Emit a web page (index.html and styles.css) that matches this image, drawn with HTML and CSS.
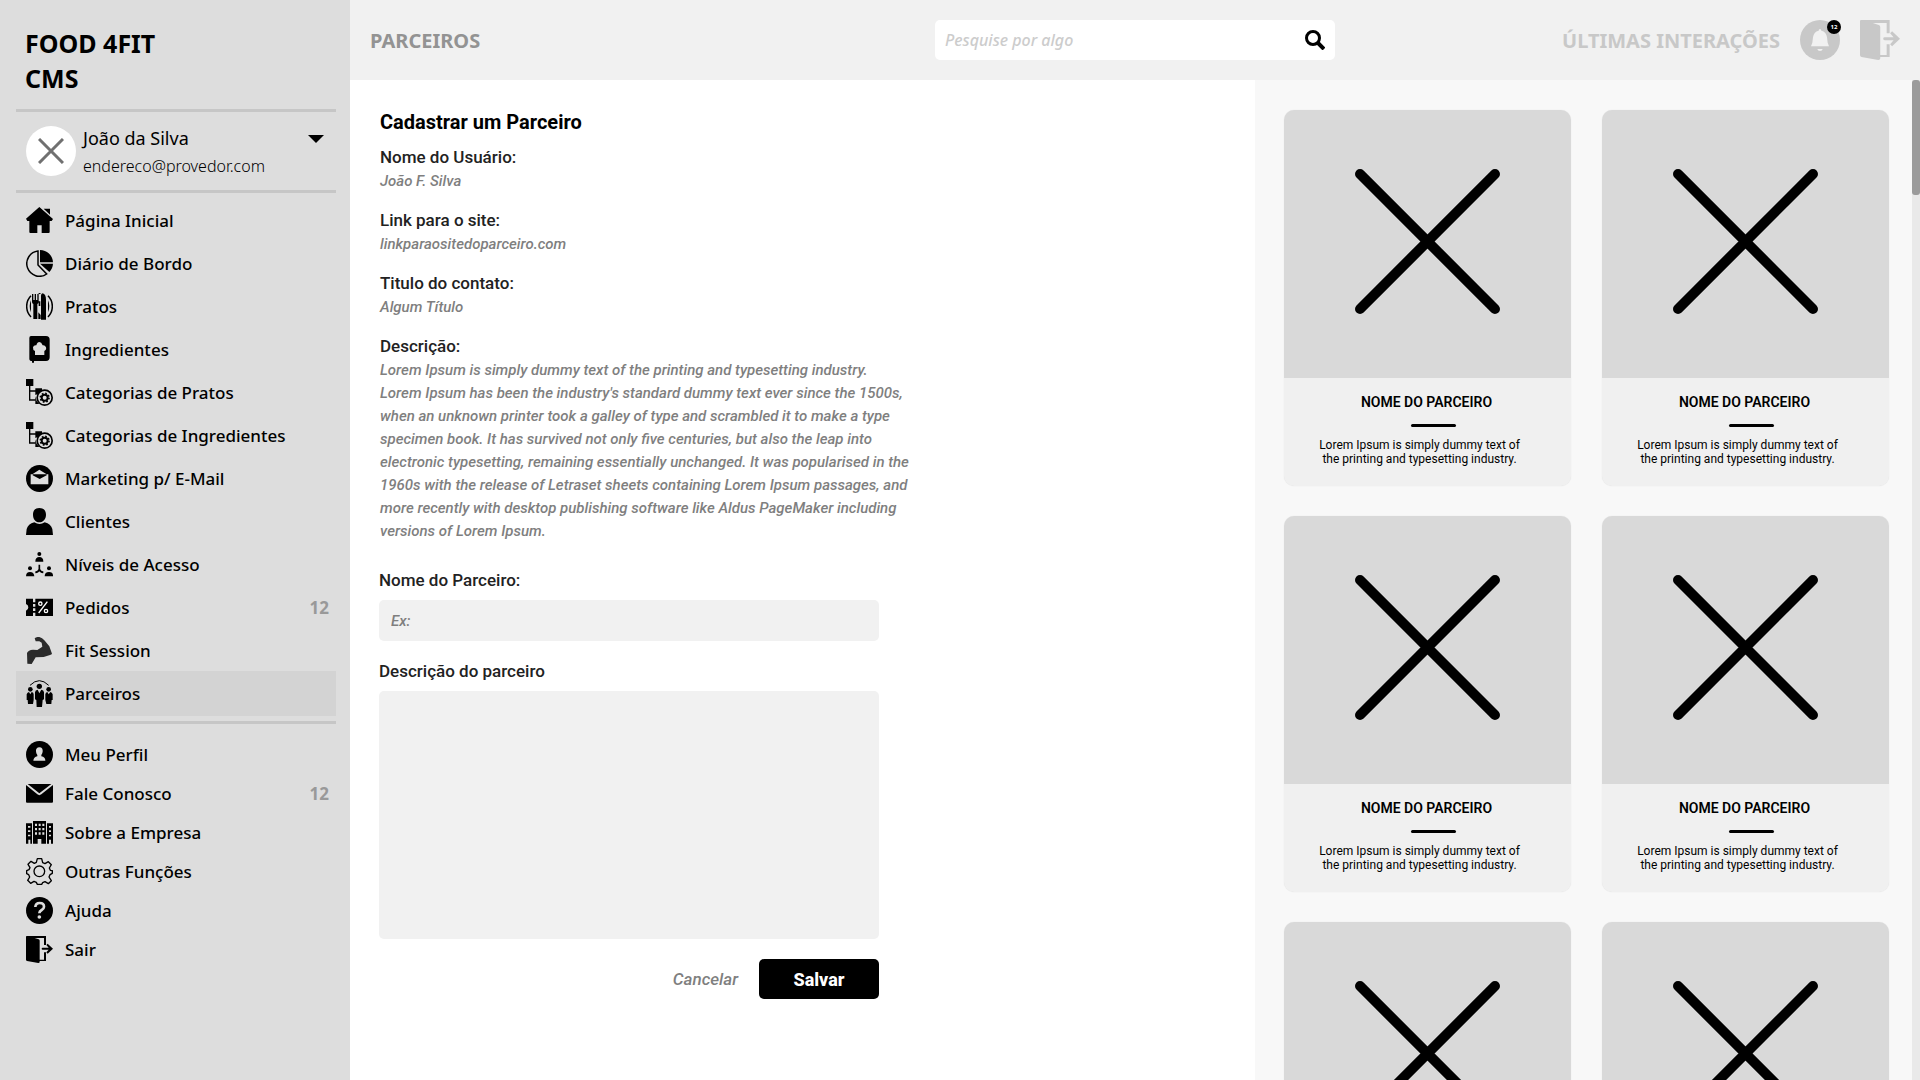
FILE: index.html
```html
<!DOCTYPE html>
<html lang="pt-BR">
<head>
<meta charset="utf-8">
<meta name="viewport" content="width=device-width, initial-scale=1">
<title>Food 4Fit CMS - Parceiros</title>
<link rel="stylesheet" href="styles.css">
</head>
<body>
<svg class="sprite" aria-hidden="true">
  <symbol id="tree-gear" viewBox="0 0 81 81">
    <path d="M0 0h22v21H0z"/>
    <path d="M11 20v43h18M13 36h18" fill="none" stroke="currentColor" stroke-width="4"/>
    <path d="M28 28h20v8L34 46l-6 2zM28 52l4 14 8 9H28z"/>
    <circle cx="56" cy="56" r="22.500" fill="none" stroke="currentColor" stroke-width="5"/>
    <circle cx="56" cy="56" r="9" fill="none" stroke="currentColor" stroke-width="6"/>
    <circle cx="56" cy="56" r="13" fill="none" stroke="currentColor" stroke-width="5" stroke-dasharray="5 5.200"/>
  </symbol>
  <symbol id="door" viewBox="0 0 81 81">
    <path d="M2 0h58v27h-6V6H26l12 4q3 1 3 4v57h13V49h6v26H41v3q0 3-4 3L3 75q-3-1-3-4V3q0-3 2-3z"/>
    <path d="M50 35h18l-7-8 4-4 16 15-16 15-4-4 7-8H50q-3 0-3-3t3-3z"/>
  </symbol>
  <symbol id="cross" viewBox="0 0 144 144">
    <path d="M5 5l134 134M139 5L5 139" fill="none" stroke="currentColor" stroke-width="10" stroke-linecap="round"/>
  </symbol>
</svg>

<div class="app">
  <aside class="sidebar">
    <h1 class="brand">FOOD 4FIT<br>CMS</h1>
    <button class="user" type="button">
      <span class="avatar"><svg viewBox="0 0 26 26"><path d="M1 1l24 24M25 1L1 25" fill="none" stroke="#707070" stroke-width="3"/></svg></span>
      <span class="user-text"><span class="user-name">João da Silva</span><span class="user-mail">endereco@provedor.com</span></span>
      <svg class="caret" viewBox="0 0 16 8"><path d="M0 0h16L8 8z"/></svg>
    </button>
    <nav>
      <ul class="menu menu-main">
        <li><a href="#"><svg class="icon" viewBox="0 0 81 81"><path d="M40 0L0 35l4 7h6v33q0 3 3 3h21V55h13v23h21q3 0 3-3V42h6l4-6zM53 5h19v18z"/></svg>Página Inicial</a></li>
        <li><a href="#"><svg class="icon" viewBox="0 0 81 81"><path d="M36 3a38 38 0 1 0 26 69L36 45z" fill="none" stroke="currentColor" stroke-width="4.500"/><path d="M42 0a39 39 0 0 1 39 37H42zM42 41h39q-1 15-11 25z"/></svg>Diário de Bordo</a></li>
        <li><a href="#"><svg class="icon" viewBox="0 0 81 81"><path d="M15 8Q2 21 2 40t13 32M66 8q13 13 13 32T66 72" fill="none" stroke="currentColor" stroke-width="4.500"/><path d="M15 22q-8 18 0 36zM66 22q8 18 0 36zM18 3h4v18h4V3h4v18h4V3h4v24q0 4-4 6v45H22V33q-4-2-4-6zM38 25h5v14h-5zM37 58l7 8v12h-7zM50 1q10 3 10 19v60H45V8q0-6 5-7zM36 0h9l-4 4z"/></svg>Pratos</a></li>
        <li><a href="#"><svg class="icon" viewBox="0 0 81 81"><path fill-rule="evenodd" d="M15 0h45q11 0 11 11v53q0 11-11 11H24v5h-6v-5q-8 0-8-7V6q0-6 5-6zM27 57h28V45q7-3 5-11-3-7-10-6-4-10-10-10t-9 10q-8-1-10 6-1 8 6 11z"/></svg>Ingredientes</a></li>
        <li><a href="#"><svg class="icon"><use href="#tree-gear"/></svg>Categorias de Pratos</a></li>
        <li><a href="#"><svg class="icon"><use href="#tree-gear"/></svg>Categorias de Ingredientes</a></li>
        <li><a href="#"><svg class="icon" viewBox="0 0 81 81"><circle cx="40.500" cy="40.500" r="40.500"/><path class="cut" d="M14 28h5l21-14 22 14h5v30H14z"/><path d="M20 28h42v3L41 42 20 31z"/></svg>Marketing p/ E-Mail</a></li>
        <li><a href="#"><svg class="icon" viewBox="0 0 81 81"><path d="M40 0c13 0 20 8 20 20S52 43 40 43 21 32 21 20 27 0 40 0zM25 43q16 10 31 0 19 5 23 20l2 18H0l2-18q4-15 23-20z"/></svg>Clientes</a></li>
        <li><a href="#"><svg class="icon" viewBox="0 0 81 81"><circle cx="40" cy="9" r="6"/><circle cx="12" cy="52" r="6"/><circle cx="69" cy="52" r="6"/><path d="M28 32q0-14 12-14t12 14zM0 76q0-13 12-13t13 13zM56 76q0-13 13-13t12 13z"/><path d="M40 41v15M40 55q-3 8-12 9M40 55q3 8 12 9" fill="none" stroke="currentColor" stroke-width="5"/></svg>Níveis de Acesso</a></li>
        <li><a href="#"><svg class="icon" viewBox="0 0 81 81"><path d="M0 14h21v52H0V50q7-2 7-10t-7-10zM28 14h53v52H28z"/><path d="M22 18v44h5V18z" class="cut"/><path d="M19 25h11v5H19zM19 38h11v5H19zM19 51h11v5H19z"/><g fill="none" stroke="#fff" stroke-width="4"><circle cx="43" cy="29" r="5"/><circle cx="60" cy="51" r="5"/><path d="M64 23L38 57"/></g></svg>Pedidos<span class="count">12</span></a></li>
        <li><a href="#"><svg class="icon" viewBox="0 0 81 81"><path fill="#2b2b2b" d="M26 4q5-5 14-4 9 3 15 10l15 18 8 22q-1 3-6 4L53 60l-24 1-12 20-13-1-1-32q4-9 18-10l13 1 15-10-2-12-7-4H29z"/></svg>Fit Session</a></li>
        <li><a class="active" href="#" aria-current="page"><svg class="icon" viewBox="0 0 81 81"><path d="M12 16q28-28 56 0" fill="none" stroke="currentColor" stroke-width="3"/><circle cx="40" cy="19" r="8"/><circle cx="13" cy="28" r="7"/><circle cx="68" cy="28" r="7"/><path d="M27 37q1-7 8-8l5 11 6-11q7 1 8 8v21l-4 2-2 21H32l-1-21-4-2zM2 43q2-6 7-7l4 7 4-7q6 1 6 7v17l-2 12H6L5 60H2zM58 43q1-6 6-7l4 7 5-7q5 1 7 7v17h-3l-1 12H61l-3-12z"/></svg>Parceiros</a></li>
      </ul>
      <ul class="menu menu-extra">
        <li><a href="#"><svg class="icon" viewBox="0 0 81 81"><circle cx="40.500" cy="40.500" r="40.500"/><path class="cut" d="M40 19c8 0 11 6 10 13q-1 6-4 10v4q12 2 12 13H22q1-11 12-13v-4q-4-5-4-11c-1-6 3-12 10-12z"/></svg>Meu Perfil</a></li>
        <li><a href="#"><svg class="icon" viewBox="0 0 81 81"><path d="M5 12h71L40 40zM0 15l34 28q6 5 12 0l35-28v50q0 3-3 3H3q-3 0-3-3z"/></svg>Fale Conosco<span class="count">12</span></a></li>
        <li><a href="#"><svg class="icon" viewBox="0 0 81 81"><path fill-rule="evenodd" d="M21 6h39v68H46V60H35v14H21zM27 14v7h6v-7zM38 14v7h6v-7zM49 14v7h6v-7zM27 27v7h6v-7zM38 27v7h6v-7zM49 27v7h6v-7zM27 40v7h6v-7zM38 40v7h6v-7zM49 40v7h6v-7zM0 13h18v61h-5V62H7v12H0zM6 21v5h7v-5zM6 34v5h7v-5zM6 47v5h7v-5zM63 13h18v61h-6V62h-6v12h-6zM69 21v5h6v-5zM69 34v5h6v-5zM69 47v5h6v-5z"/></svg>Sobre a Empresa</a></li>
        <li><a href="#"><svg class="icon" viewBox="0 0 81 81"><g fill="none" stroke="currentColor" stroke-width="4" stroke-linejoin="round"><path d="M34 2h13l3 12 7 3 10-6 9 9-6 10 3 7 6 1v8l-7 4-3 7 7 11-9 9-10-6-7 3-3 5H34l-3-6-7-3-10 6-9-9 6-10-3-7-6-3v-9l7-3 3-6-6-10 9-9 10 6 6-3z"/><circle cx="40" cy="40" r="16"/></g></svg>Outras Funções</a></li>
        <li><a href="#"><svg class="icon" viewBox="0 0 81 81"><circle cx="40.500" cy="40.500" r="40.500"/><path d="M28 30q1-12 13-12 13 0 13 11 0 6-7 10-7 4-7 10" fill="none" stroke="#ddd" stroke-width="8"/><circle cx="40" cy="60" r="5.500" class="cut"/></svg>Ajuda</a></li>
        <li><a href="#"><svg class="icon"><use href="#door"/></svg>Sair</a></li>
      </ul>
    </nav>
  </aside>

  <header class="topbar">
    <h2 class="page-title">PARCEIROS</h2>
    <form class="search" role="search">
      <input type="search" placeholder="Pesquise por algo" aria-label="Pesquise por algo">
      <button type="button" aria-label="Pesquisar"><svg viewBox="0 0 20 20"><g fill="none" stroke="#000" stroke-width="3"><circle cx="8" cy="8" r="6.500"/><path d="M12 12l7 7" stroke-width="4"/></g></svg></button>
    </form>
    <div class="actions">
      <h2 class="recent">ÚLTIMAS INTERAÇÕES</h2>
      <button class="bell" type="button" aria-label="Notificações"><svg viewBox="0 0 120 120"><circle cx="60" cy="60" r="60"/><path fill="#f1f1f1" d="M60 27q4 0 4 5 15 3 17 20l2 16 4 11H33l4-11 2-16q2-17 17-20 0-5 4-5zM52 87h16q-1 6-8 6t-8-6z"/></svg><span class="badge">12</span></button>
      <button class="exit" type="button" aria-label="Sair"><svg><use href="#door"/></svg></button>
    </div>
  </header>

  <main class="content">
    <h3 class="form-title">Cadastrar um Parceiro</h3>
    <dl class="details">
      <div><dt>Nome do Usuário:</dt><dd>João F. Silva</dd></div>
      <div><dt>Link para o site:</dt><dd>linkparaositedoparceiro.com</dd></div>
      <div><dt>Titulo do contato:</dt><dd>Algum Título</dd></div>
      <div><dt>Descrição:</dt><dd>Lorem Ipsum is simply dummy text of the printing and typesetting industry.<br>Lorem Ipsum has been the industry's standard dummy text ever since the 1500s,<br>when an unknown printer took a galley of type and scrambled it to make a type<br>specimen book. It has survived not only five centuries, but also the leap into<br>electronic typesetting, remaining essentially unchanged. It was popularised in the<br>1960s with the release of Letraset sheets containing Lorem Ipsum passages, and<br>more recently with desktop publishing software like Aldus PageMaker including<br>versions of Lorem Ipsum.</dd></div>
    </dl>
    <form class="partner-form">
      <label for="nome">Nome do Parceiro:</label>
      <input id="nome" type="text" placeholder="Ex:">
      <label for="descricao">Descrição do parceiro</label>
      <textarea id="descricao"></textarea>
      <div class="buttons">
        <button class="cancel" type="reset">Cancelar</button>
        <button class="save" type="button">Salvar</button>
      </div>
    </form>
  </main>

  <section class="partners" aria-label="Parceiros cadastrados">
    <div class="cards">
      <article class="card"><div class="photo"><svg><use href="#cross"/></svg></div><h4>NOME DO PARCEIRO</h4><hr><p>Lorem Ipsum is simply dummy text of the printing and typesetting industry.</p></article>
      <article class="card"><div class="photo"><svg><use href="#cross"/></svg></div><h4>NOME DO PARCEIRO</h4><hr><p>Lorem Ipsum is simply dummy text of the printing and typesetting industry.</p></article>
      <article class="card"><div class="photo"><svg><use href="#cross"/></svg></div><h4>NOME DO PARCEIRO</h4><hr><p>Lorem Ipsum is simply dummy text of the printing and typesetting industry.</p></article>
      <article class="card"><div class="photo"><svg><use href="#cross"/></svg></div><h4>NOME DO PARCEIRO</h4><hr><p>Lorem Ipsum is simply dummy text of the printing and typesetting industry.</p></article>
      <article class="card"><div class="photo"><svg><use href="#cross"/></svg></div><h4>NOME DO PARCEIRO</h4><hr><p>Lorem Ipsum is simply dummy text of the printing and typesetting industry.</p></article>
      <article class="card"><div class="photo"><svg><use href="#cross"/></svg></div><h4>NOME DO PARCEIRO</h4><hr><p>Lorem Ipsum is simply dummy text of the printing and typesetting industry.</p></article>
    </div>
    <div class="track"><div class="thumb"></div></div>
  </section>
</div>
</body>
</html>
```
FILE: styles.css
```css
* { box-sizing: border-box; }

body,
h1, h2, h3, h4, p, ul, dl, dd { margin: 0; padding: 0; }

body {
  font-family: Roboto, sans-serif;
  color: #000;
  background: #fff;
}

button, input, textarea {
  font: inherit;
  color: inherit;
  border: 0;
  padding: 0;
  background: none;
}

button { cursor: pointer; }
svg { display: block; fill: currentColor; }
.sprite { position: absolute; width: 0; height: 0; }

.app {
  display: grid;
  grid-template-columns: 350px minmax(0, 1fr) 665px;
  grid-template-rows: 80px minmax(0, 1fr);
  height: 100vh;
}

/* Sidebar */
.sidebar {
  grid-row: 1 / 3;
  padding: 26px 14px 0 16px;
  background: #ddd;
  font-family: "Noto Sans", "Open Sans", sans-serif;
  overflow: hidden;
}

.brand {
  padding-left: 9px;
  font-size: 25px;
  line-height: 35px;
  font-weight: 700;
}

.user {
  display: flex;
  width: 100%;
  height: 84px;
  margin-top: 13px;
  padding: 14px 12px 0 10px;
  border: solid #c6c6c6;
  border-width: 3px 0;
  text-align: left;
}

.avatar {
  display: grid;
  place-items: center;
  width: 50px;
  height: 50px;
  border-radius: 50%;
  background: #fff;
}

.avatar svg { width: 26px; }
.user-text { flex: 1; padding-left: 7px; }
.user-name { display: block; font-size: 18px; line-height: 25px; font-weight: 400; }
.user-mail { display: block; font-size: 16px; line-height: 30px; font-weight: 300; }
.caret { width: 16px; height: 8px; margin-top: 9px; }

.menu { list-style: none; }
.menu-main { padding: 6px 0; border-bottom: 3px solid #c6c6c6; }
.menu-extra { padding-top: 11px; }

.menu a {
  display: flex;
  align-items: center;
  height: 43px;
  padding: 0 7px 0 10px;
  color: #000;
  text-decoration: none;
  font-size: 17px;
  font-weight: 500;
}

.menu-extra a { height: 39px; }
.menu .active { height: 45px; margin: -1px 0; background: #d3d3d3; }
.icon { width: 27px; height: 27px; margin-right: 12px; }
.cut { fill: #ddd; }
.count { margin-left: auto; font-weight: 700; color: #999; }

/* Top bar */
.topbar {
  grid-column: 2 / 4;
  display: grid;
  grid-template-columns: 1fr 400px 1fr;
  align-items: center;
  padding: 0 20px;
  background: #f1f1f1;
  font-family: "Noto Sans", "Open Sans", sans-serif;
}

.page-title, .recent { padding-top: 2px; font-size: 20px; line-height: 28px; font-weight: 700; }
.page-title { color: #939393; }
.recent { color: #c8c8c8; }

.search {
  display: flex;
  align-items: center;
  height: 40px;
  padding: 0 10px;
  border-radius: 5px;
  background: #fff;
}

.search input { flex: 1; min-width: 0; outline: 0; font-size: 16px; font-style: italic; font-weight: 500; }
.search input::placeholder { color: #ccc; opacity: 1; }
.search svg { width: 20px; height: 20px; }

.actions {
  display: flex;
  align-items: center;
  justify-content: flex-end;
  gap: 20px;
  color: #c8c8c8;
}

.bell { position: relative; }
.bell svg, .exit svg { width: 40px; height: 40px; }

.badge {
  position: absolute;
  top: 0;
  right: -1px;
  width: 14px;
  height: 14px;
  border-radius: 50%;
  background: #000;
  color: #fff;
  font-size: 6px;
  line-height: 14px;
  font-weight: 700;
  text-align: center;
}

/* Form */
.content { padding: 29px; overflow: hidden; }
.form-title { font-size: 20px; line-height: 26px; font-weight: 700; }
.form-title, .details { padding-left: 1px; }
.details { padding-top: 11px; }
.details div { padding-bottom: 16px; }
.details dt { padding-bottom: 2px; font-size: 17px; line-height: 22px; font-weight: 500; color: #222; }
.details dd { font-size: 15px; line-height: 23px; font-weight: 500; font-style: italic; color: #7f7f7f; }

.partner-form { display: flex; flex-direction: column; max-width: 500px; padding-top: 11px; }
.partner-form label { font-size: 17px; line-height: 20px; font-weight: 500; color: #222; padding-bottom: 10px; }
.partner-form input, .partner-form textarea { border-radius: 5px; background: #f1f1f1; padding: 0 12px; }
.partner-form input { height: 41px; margin-bottom: 20px; font-size: 15px; font-weight: 500; font-style: italic; }
.partner-form input::placeholder { color: #7f7f7f; opacity: 1; }
.partner-form textarea { height: 248px; resize: none; }

.buttons { display: flex; justify-content: flex-end; gap: 21px; padding-top: 20px; }
.cancel { font-size: 17px; font-style: italic; font-weight: 500; color: #7f7f7f; }
.save { width: 120px; height: 40px; border-radius: 5px; background: #000; color: #fff; font-size: 18px; font-weight: 800; }

/* Partner cards */
.partners { display: flex; background: #f8f8f8; overflow: hidden; }

.cards {
  flex: 1;
  display: grid;
  grid-template-columns: 1fr 1fr;
  align-content: start;
  gap: 30px 31px;
  padding: 30px 23px 30px 29px;
  overflow-y: auto;
  scrollbar-width: none;
}

.card {
  height: 376px;
  border-radius: 10px;
  background: #f0f0f0;
  box-shadow: 0 0 1px #ddd;
  overflow: hidden;
  text-align: center;
}

.photo { display: grid; justify-items: center; height: 268px; padding-top: 59px; background: #d9d9d9; }
.photo svg { width: 145px; height: 145px; }
.card h4 { padding: 14px 2px 0 0; font-size: 14px; line-height: 20px; font-weight: 600; }
.card hr { width: 45px; height: 3px; margin: 12px 0 11px 127px; border: 0; border-radius: 2px; background: #000; }
.card p { padding: 0 48px 0 32px; font-size: 12px; line-height: 14px; }

.track { width: 8px; background: #e9e9e9; }
.thumb { height: 115px; border-radius: 3px; background: #9b9b9b; }
```
